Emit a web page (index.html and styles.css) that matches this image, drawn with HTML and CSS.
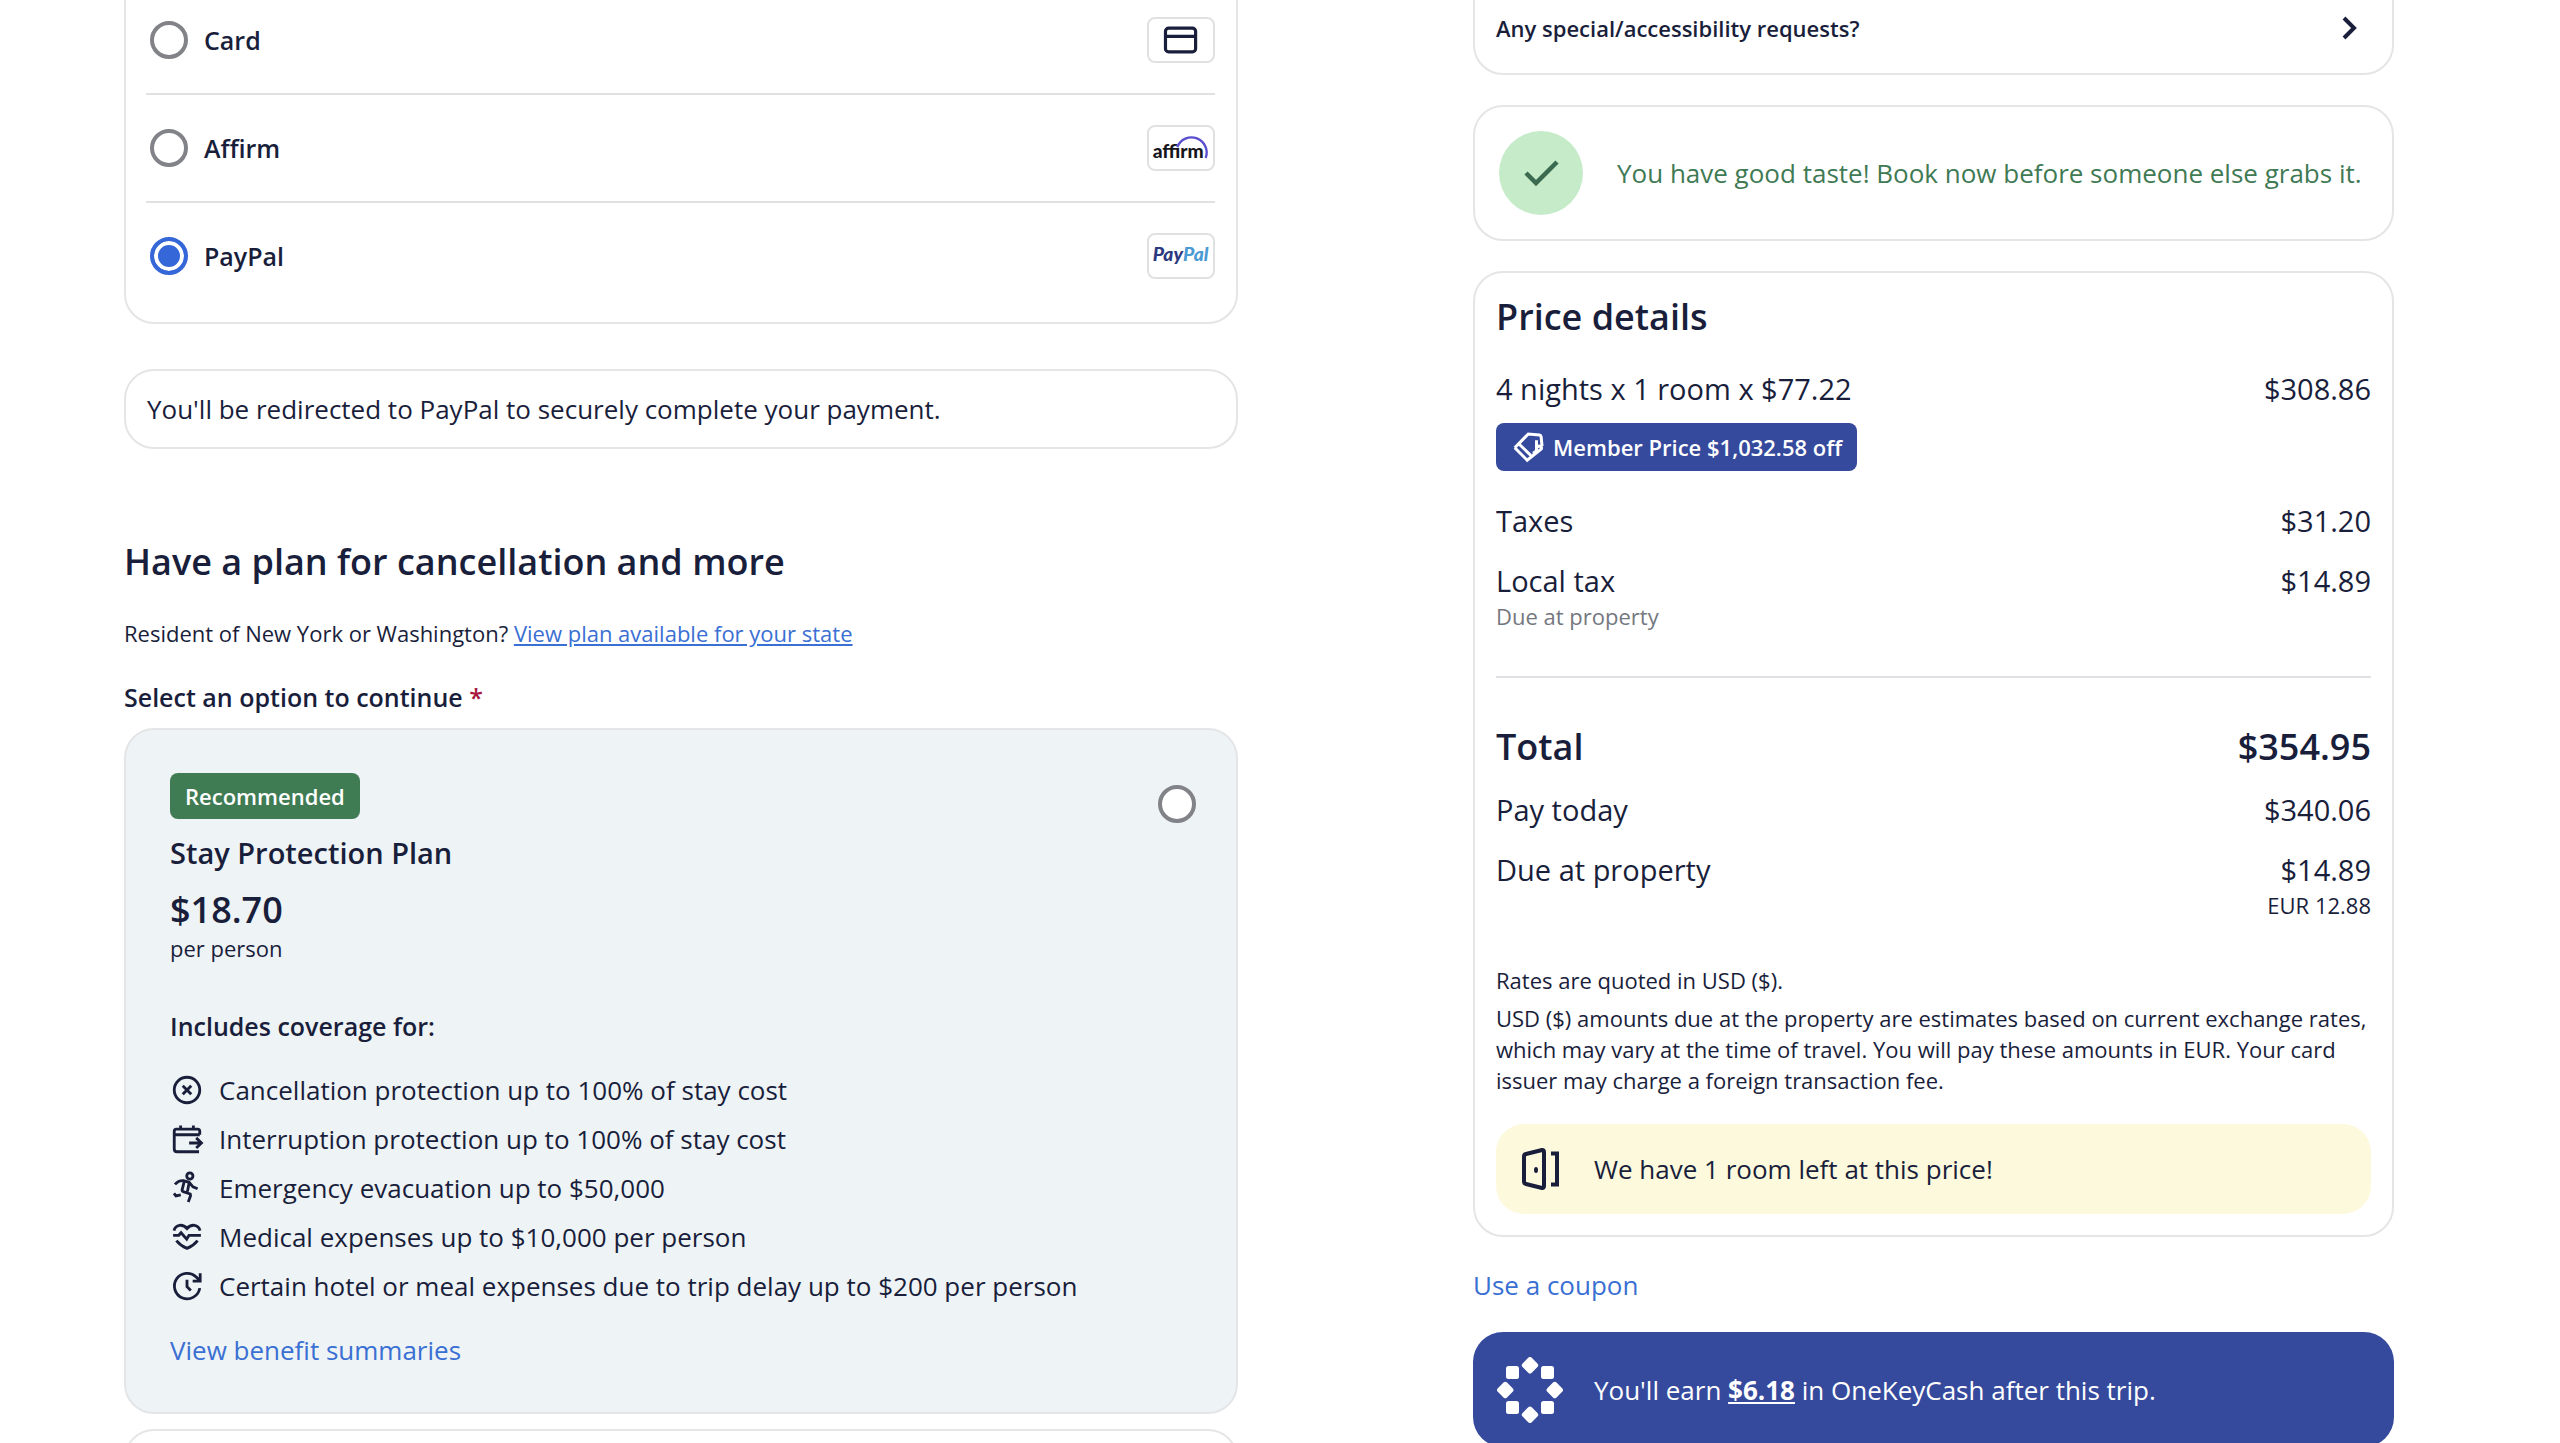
FILE: index.html
```html
<!DOCTYPE html>
<html lang="en">
<head>
  <meta charset="UTF-8">
  <meta name="viewport" content="width=device-width, initial-scale=1">
  <title>Checkout</title>
  <link rel="stylesheet" href="styles.css">
</head>
<body>
  <div class="page">
    <main class="main">
      <div class="card methods">
        <div class="method">
          <input class="radio" type="radio" name="payment" id="payCard">
          <label for="payCard">Card</label>
          <svg class="logo" viewBox="0 0 68 46" fill="none" stroke="#191e3b">
            <rect x="17" y="10" width="33" height="26" rx="3.5" stroke-width="3.5"/>
            <path d="M17 19h33" stroke-width="3.5"/>
          </svg>
        </div>
        <div class="method">
          <input class="radio" type="radio" name="payment" id="payAffirm">
          <label for="payAffirm">Affirm</label>
          <svg class="logo" viewBox="0 0 68 46">
            <text class="affirm-text" x="3" y="34">affirm</text>
            <path d="M30 22A16 16 0 1 1 61 34" fill="none" stroke="#5a4fcf" stroke-width="2.6"/>
          </svg>
        </div>
        <div class="method">
          <input class="radio" type="radio" name="payment" id="payPaypal" checked>
          <label for="payPaypal">PayPal</label>
          <svg class="logo" viewBox="0 0 68 46">
            <text class="paypal-text" x="3" y="28"><tspan fill="#2b3a80">Pay</tspan><tspan fill="#4a9ad4">Pal</tspan></text>
          </svg>
        </div>
      </div>

      <div class="card redirect">You'll be redirected to PayPal to securely complete your payment.</div>

      <h2 class="plan-title">Have a plan for cancellation and more</h2>
      <p class="resident">Resident of New York or Washington? <a href="#">View plan available for your state</a></p>
      <p class="select-label">Select an option to continue <span class="required">*</span></p>

      <div class="card plan">
        <div class="plan-head">
          <div>
            <span class="badge badge-green">Recommended</span>
            <h3><label for="planStay">Stay Protection Plan</label></h3>
          </div>
          <input class="radio" type="radio" name="plan" id="planStay">
        </div>
        <div class="plan-price">$18.70</div>
        <div class="small">per person</div>
        <h4>Includes coverage for:</h4>
        <ul class="coverage">
          <li>
            <svg class="icon" viewBox="0 0 24 24"><circle cx="12" cy="12" r="9"/><path d="M9 9l6 6M15 9l-6 6"/></svg>
            Cancellation protection up to 100% of stay cost
          </li>
          <li>
            <svg class="icon" viewBox="0 0 24 24"><path d="M21 9V6.5q0-1.5-1.5-1.5h-15Q3 5 3 6.5v12.5q0 2 2 2h15.5M3 9h18M7.5 2.5v2M16.5 2.5v2M13.500 14.8h8.5M18.5 11.2l3.7 3.6-3.7 3.6"/></svg>
            Interruption protection up to 100% of stay cost
          </li>
          <li>
            <svg class="icon" viewBox="0 0 24 24"><circle cx="14" cy="3.5" r="2.2"/><path d="M3.5 9.5q2.5-3 6-2.7l4 1.2 2.7 3.2 3.3 1.3M10 7.5l-1.5 6q0 .8.8 1l5 1.7.2 1.3-1.6 4.3M13.5 8.5l-1.2 6M2.8 15.8l1.4 1.8 3.4-.8"/></svg>
            Emergency evacuation up to $50,000
          </li>
          <li>
            <svg class="icon" viewBox="0 0 24 24"><path d="M2.8 7.5C4 3 9 2.5 12 6c3-3.5 8-3 9.2 1.5M2.2 10.8h4l1.6-1.8 4 4.5 1.6-2.7h8.4M4.5 14.5q3 3.700 7.5 5.5 4.5-1.8 7.5-5.5"/></svg>
            Medical expenses up to $10,000 per person
          </li>
          <li>
            <svg class="icon" viewBox="0 0 24 24"><path d="M21 13.500A9 9 0 1 1 18.5 5.7L21 8.2M21.3 3v5.5h-5.3M12 7.5v5l2.7 2.7"/></svg>
            Certain hotel or meal expenses due to trip delay up to $200 per person
          </li>
        </ul>
        <a class="link" href="#">View benefit summaries</a>
      </div>

      <div class="card next-plan"></div>
    </main>

    <aside class="side">
      <div class="card requests">
        <button type="button" class="requests-btn">
          Any special/accessibility requests?
          <svg class="chevron" viewBox="0 0 24 36"><path d="M5 8l10 10L5 28"/></svg>
        </button>
      </div>

      <div class="card taste">
        <svg class="tick" viewBox="0 0 84 84">
          <circle cx="42" cy="42" r="42" fill="#c5ebc9"/>
          <path d="M27 42l10 10 21-21" fill="none" stroke="#3a6b50" stroke-width="4.5"/>
        </svg>
        You have good taste! Book now before someone else grabs it.
      </div>

      <div class="card price">
        <h2>Price details</h2>
        <div class="line"><span>4 nights x 1 room x $77.22</span><span>$308.86</span></div>
        <div class="badge badge-blue">
          <svg class="tag" viewBox="0 0 24 24"><path d="M2.5 12.5L11.5 3.3l7.5.7q1 .2 1.1 1.2l.6 6.3M2.5 12.5l8.3 8.3L20 13.5q.8-1-.2-1.8-1.5-.8-2.8.8M5.2 9.8l8.6 8.4M17 7.5v6q-.2 2.5-2.6 2.5"/></svg>
          Member Price $1,032.58 off
        </div>
        <div class="line taxes"><span>Taxes</span><span>$31.20</span></div>
        <div class="line"><span>Local tax</span><span>$14.89</span></div>
        <div class="small muted">Due at property</div>
        <hr>
        <div class="line total"><span>Total</span><span>$354.95</span></div>
        <div class="line"><span>Pay today</span><span>$340.06</span></div>
        <div class="line"><span>Due at property</span><span>$14.89</span></div>
        <div class="small eur">EUR 12.88</div>
        <div class="notes">
          <p>Rates are quoted in USD ($).</p>
          <p>USD ($) amounts due at the property are estimates based on current exchange rates, which may vary at the time of travel. You will pay these amounts in EUR. Your card issuer may charge a foreign transaction fee.</p>
        </div>
        <div class="room-left">
          <svg class="door" viewBox="0 0 48 48"><path d="M7 9l16-4q2-.3 2 2v34q0 2.3-2 2L7 39q-2-.5-2-2.5v-25Q5 9.500 7 9zM32 8.5h6v31h-6"/><ellipse cx="17" cy="25" rx="2" ry="3" fill="#191e3b" stroke="none"/></svg>
          We have 1 room left at this price!
        </div>
      </div>

      <a class="link coupon" href="#">Use a coupon</a>

      <div class="earn">
        <svg class="onekey" viewBox="0 0 66 66" fill="#fff">
          <g id="ring">
            <rect x="9" y="9" width="13" height="13" rx="2.5"/>
            <rect x="44" y="9" width="13" height="13" rx="2.5"/>
            <rect x="9" y="44" width="13" height="13" rx="2.5"/>
            <rect x="44" y="44" width="13" height="13" rx="2.5"/>
          </g>
          <use href="#ring" transform="rotate(45 33 33)"/>
        </svg>
        <span>You'll earn <a href="#">$6.18</a> in OneKeyCash after this trip.</span>
      </div>
    </aside>
  </div>
</body>
</html>
```
FILE: styles.css
```css
* {
  box-sizing: border-box;
}
body {
  margin: 0;
  height: 100vh;
  overflow: hidden;
  font-family: "Open Sans", "Noto Sans", sans-serif;
  font-size: 26px;
  line-height: 36px;
  color: #191e3b;
  background: #fff;
}
h2, h3, h4, p, ul {
  margin: 0;
  padding: 0;
}
h2 {
  font-size: 36px;
  line-height: 46px;
  font-weight: 600;
}
a {
  color: #3a6fd3;
}
.page {
  display: grid;
  grid-template-columns: 1114fr 921fr;
  gap: 235px;
  align-items: start;
  padding: 0 166px 0 124px;
}
.main, .side {
  display: flex;
  flex-direction: column;
}
.card {
  border: 2px solid #e4e5e7;
  border-radius: 30px;
}
.small {
  font-size: 22px;
  line-height: 30px;
}
.muted {
  color: #75777f;
}
.link {
  align-self: flex-start;
  text-decoration: none;
}
.radio {
  appearance: none;
  flex: none;
  width: 38px;
  height: 38px;
  margin: 0;
  border: 4px solid #828388;
  border-radius: 50%;
  background: #fff;
}
.radio:checked {
  border-color: #3567d9;
  background: #3567d9;
  box-shadow: inset 0 0 0 4px #fff;
}

/* payment methods */
.methods {
  margin-top: -40px;
  padding: 25px 21px 13px 20px;
}
.method {
  display: flex;
  align-items: center;
  gap: 16px;
  height: 108px;
  padding-left: 4px;
  border-bottom: 2px solid #e0e1e3;
}
.method:last-child {
  height: 106px;
  border-bottom: none;
}
.method label {
  flex: 1;
  font-size: 25px;
  font-weight: 600;
}
.logo {
  width: 68px;
  height: 46px;
  border: 2px solid #e0e1e3;
  border-radius: 8px;
}
.affirm-text {
  font: 900 21px Lato, sans-serif;
  fill: #16161d;
}
.paypal-text {
  font: italic 900 21px Lato, sans-serif;
}
.redirect {
  margin-top: 45px;
  padding: 20px 21px;
}

/* protection plan */
.plan-title {
  margin-top: 90px;
}
.resident {
  margin-top: 33px;
  font-size: 22px;
  line-height: 30px;
}
.select-label {
  margin-top: 31px;
  font-size: 25px;
  font-weight: 600;
}
.required {
  color: #a7183c;
}
.plan {
  display: flex;
  flex-direction: column;
  margin-top: 13px;
  padding: 43px 40px 44px 44px;
  background: #eef3f6;
}
.plan-head {
  display: flex;
  justify-content: space-between;
}
.plan-head .radio {
  margin-top: 12px;
}
.plan h3 {
  margin-top: 14px;
  font-size: 29px;
  line-height: 40px;
  font-weight: 600;
}
.plan-price {
  margin-top: 14px;
  font-size: 36px;
  line-height: 46px;
  font-weight: 600;
}
.plan h4 {
  margin: 45px 0 28px;
  font-size: 25px;
  font-weight: 600;
}
.badge {
  display: flex;
  align-items: center;
  width: fit-content;
  height: 46px;
  padding: 0 15px;
  border-radius: 8px;
  font-size: 22px;
  font-weight: 600;
  color: #fff;
}
.badge-green {
  background: #3f7b53;
}
.coverage {
  display: flex;
  flex-direction: column;
  gap: 13px;
  margin-bottom: 28px;
  list-style: none;
}
.coverage li {
  display: flex;
  align-items: center;
  gap: 15px;
}
.icon {
  width: 34px;
  height: 34px;
  fill: none;
  stroke: #191e3b;
  stroke-width: 2;
}
.next-plan {
  height: 200px;
  margin-top: 15px;
}

/* right column */
.requests {
  margin-top: -40px;
  padding: 46px 21px 25px;
}
.requests-btn {
  display: flex;
  align-items: center;
  justify-content: space-between;
  width: 100%;
  height: 40px;
  padding: 0 8px 0 0;
  border: none;
  background: none;
  font: inherit;
  font-size: 22px;
  font-weight: 600;
  color: inherit;
  cursor: pointer;
}
.chevron {
  width: 24px;
  height: 36px;
  fill: none;
  stroke: #191e3b;
  stroke-width: 4;
}
.taste {
  display: flex;
  align-items: center;
  gap: 34px;
  margin-top: 30px;
  padding: 24px;
  color: #3f7a54;
}
.tick {
  width: 84px;
  height: 84px;
}
.price {
  margin-top: 30px;
  padding: 21px;
}
.price h2 {
  margin-bottom: 29px;
}
.line {
  display: flex;
  justify-content: space-between;
  font-size: 29px;
  line-height: 40px;
}
.line + .line {
  margin-top: 20px;
}
.taxes {
  margin-top: 30px;
}
.badge-blue {
  gap: 6px;
  height: 48px;
  margin-top: 14px;
  background: #354a9c;
}
.tag {
  width: 36px;
  height: 36px;
  fill: none;
  stroke: #fff;
  stroke-width: 2;
}
.price hr {
  height: 2px;
  margin: 45px 0 46px;
  border: none;
  background: #dfe0e4;
}
.total {
  font-size: 36px;
  line-height: 46px;
  font-weight: 600;
}
.eur {
  text-align: right;
}
.notes {
  margin: 45px 0 28px;
  font-size: 22px;
  line-height: 31px;
}
.notes p + p {
  margin-top: 7px;
}
.room-left {
  display: flex;
  align-items: center;
  gap: 27px;
  height: 90px;
  padding: 0 23px;
  border-radius: 28px;
  background: #fcf9dd;
}
.door {
  width: 48px;
  height: 48px;
  fill: none;
  stroke: #191e3b;
  stroke-width: 4;
}
.coupon {
  margin-top: 30px;
}
.earn {
  display: flex;
  align-items: center;
  gap: 31px;
  height: 115px;
  margin-top: 29px;
  padding: 0 24px;
  border-radius: 30px;
  background: #354a9c;
  color: #fff;
}
.earn a {
  color: #fff;
  font-weight: 700;
}
.onekey {
  width: 66px;
  height: 66px;
}
```
